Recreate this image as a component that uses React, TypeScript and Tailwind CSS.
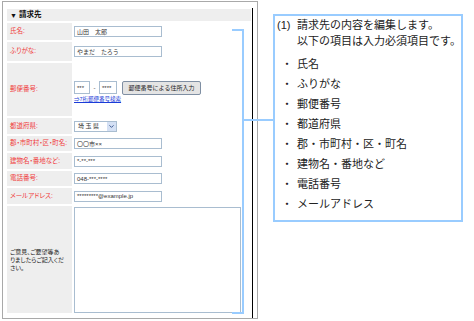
import { ChevronDown } from 'lucide-react'

const fields = [
  { label: '氏名:', value: '山田　太郎', h: 'h-[17px]' },
  { label: 'ふりがな:', value: 'やまだ　たろう', h: 'h-[19px]' },
]

const address = [
  { label: '郡・市町村・区・町名:', value: '〇〇市××', h: 'h-[15px]' },
  { label: '建物名・番地など:', value: '*-**-***', h: 'h-[16px]' },
  { label: '電話番号:', value: '048-***-****', h: 'h-[15px]' },
  { label: 'メールアドレス:', value: '*********@example.jp', h: 'h-[16px]' },
]

const required = ['氏名', 'ふりがな', '郵便番号', '都道府県', '郡・市町村・区・町名', '建物名・番地など', '電話番号', 'メールアドレス']

function Label({ text }: { text: string }) {
  return (
    <div className="w-[65px] shrink-0 bg-[#eeeeee] flex items-center pl-[3px] text-[6.5px] leading-none text-[#f03c3c] whitespace-nowrap [font-feature-settings:'palt']">
      {text}
    </div>
  )
}

function TextBox({ value }: { value: string }) {
  return (
    <div className="w-[88px] h-[11px] border border-[#a9bdd0] bg-white flex items-center px-[2px] text-[6px] leading-none text-[#333] whitespace-nowrap">
      {value}
    </div>
  )
}

export default function App() {
  return (
    <div className="relative w-[474px] h-[321px] bg-white overflow-hidden flex items-start font-['Liberation_Sans','Noto_Sans_CJK_JP',sans-serif]">
      {/* Form screenshot */}
      <div className="ml-[2px] mt-[1px] w-[256px] h-[318px] shrink-0 border border-[#a9a9a9]">
        <div className="ml-[4px] mt-[6px] w-[246px] h-[310px] border-r border-black pt-px flex flex-col">
          <div className="w-[244px] h-[12px] bg-[#eeeeee] flex items-center pl-[3px] gap-[2px] text-[7.5px] font-bold leading-none text-[#111]">
            <span className="text-[7px]">▼</span>
            <span>請求先</span>
          </div>

          <div className="mt-[2px] flex flex-col gap-[2px]">
            {fields.map(f => (
              <div key={f.label} className={`flex ${f.h}`}>
                <Label text={f.label} />
                <div className="flex-1 flex items-center pl-[2px]">
                  <TextBox value={f.value} />
                </div>
              </div>
            ))}

            {/* Postal code */}
            <div className="flex h-[53px]">
              <Label text="郵便番号:" />
              <div className="flex-1 flex flex-col justify-center pl-[2px] pt-[4px]">
                <div className="flex items-center">
                  <div className="w-[16px] h-[13px] border border-[#a9bdd0] flex items-center pl-[2px] text-[6px] leading-none text-[#333]">***</div>
                  <span className="w-[9px] text-center text-[6px] leading-none text-[#333]">-</span>
                  <div className="w-[18px] h-[13px] border border-[#a9bdd0] flex items-center pl-[2px] text-[6px] leading-none text-[#333]">****</div>
                  <button className="ml-[5px] w-[79px] h-[14px] rounded-[2px] border border-[#7f8fa3] bg-[#e4e4e4] text-[6px] leading-none text-[#222] whitespace-nowrap">
                    郵便番号による住所入力
                  </button>
                </div>
                <a className="mt-[1px] text-[5.5px] leading-[7px] text-[#1a3cd8] underline whitespace-nowrap">⇒7桁郵便番号検索</a>
              </div>
            </div>

            {/* Prefecture */}
            <div className="flex h-[16px]">
              <Label text="都道府県:" />
              <div className="flex-1 flex items-center pl-[2px]">
                <div className="w-[43px] h-[11px] border border-[#a9bdd0] flex items-center">
                  <span className="flex-1 pl-[3px] text-[6px] leading-none tracking-[1.5px] text-[#333]">埼玉県</span>
                  <span className="w-[9px] h-full bg-[#d4e0f4] flex items-center justify-center">
                    <ChevronDown className="w-[7px] h-[7px] text-[#2b4a86]" strokeWidth={3} />
                  </span>
                </div>
              </div>
            </div>

            {address.map(f => (
              <div key={f.label} className={`flex ${f.h}`}>
                <Label text={f.label} />
                <div className="flex-1 flex items-center pl-[2px]">
                  <TextBox value={f.value} />
                </div>
              </div>
            ))}

            {/* Comments */}
            <div className="flex h-[107px]">
              <div className="w-[65px] shrink-0 bg-[#eeeeee] flex items-center pl-[3px] text-[6px] leading-[8px] text-[#222] whitespace-nowrap [font-feature-settings:'palt']">
                <p>ご意見、ご要望等あ<br />りましたらご記入くだ<br />さい。</p>
              </div>
              <div className="flex-1 flex items-center pl-[2px]">
                <div className="w-[167px] h-[106px] border border-[#a9bdd0] bg-white" />
              </div>
            </div>
          </div>
        </div>
      </div>

      {/* Callout */}
      <div className="ml-[15px] mt-[14px] w-[190px] h-[208px] shrink-0 border-2 border-[#99ccff] px-[2px] pt-px text-[11px] text-[#222] whitespace-nowrap">
        <div className="flex leading-[16px]">
          <span className="w-[20px] shrink-0">(1)</span>
          <div>
            <p>請求先の内容を編集します。</p>
            <p>以下の項目は入力必須項目です。</p>
          </div>
        </div>
        <ul className="mt-[5px]">
          {required.map(r => (
            <li key={r} className="flex h-[20px] items-center">
              <span className="w-[20px] shrink-0 text-center">・</span>
              <span>{r}</span>
            </li>
          ))}
        </ul>
      </div>

      {/* Bracket */}
      <div className="absolute left-[232px] top-[29px] w-[12px] h-[285px] border-2 border-l-0 border-[#99ccff]" />
      <div className="absolute left-[244px] top-[119px] w-[29px] h-[2px] bg-[#99ccff]" />
    </div>
  )
}
